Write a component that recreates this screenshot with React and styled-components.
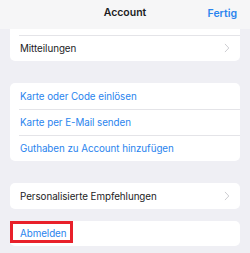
import React from "react";
import styled, { createGlobalStyle } from "styled-components";

const Global = createGlobalStyle`
  html, body { margin: 0; padding: 0; background: #efeff4; }
  body { font-family: Inter, "Noto Sans", sans-serif; -webkit-font-smoothing: antialiased; }
`;

const Screen = styled.div`
  position: relative;
  width: 250px;
  height: 253px;
  overflow: hidden;
  background: #efeff4;
`;

const NavBar = styled.div`
  position: absolute;
  top: 0;
  left: 0;
  right: 0;
  height: 29px;
  background: #f6f6f7;
  display: flex;
  align-items: center;
  justify-content: center;
  z-index: 2;
`;

const Title = styled.div`
  font-size: 10.5px;
  font-weight: 600;
  color: #1c1c1e;
  margin-top: -4px;
`;

const Done = styled.div`
  position: absolute;
  right: 13px;
  top: 7px;
  font-size: 10.5px;
  font-weight: 600;
  color: #2a84ee;
`;

const Content = styled.div`
  display: flex;
  flex-direction: column;
  padding: 9px 10px 0;
`;

const Card = styled.div`
  position: relative;
  background: #fff;
  border-radius: 5px;
  margin-bottom: ${p => p.gap || 22}px;
`;

const Row = styled.div`
  position: relative;
  height: ${p => p.h || 26}px;
  display: flex;
  align-items: center;
  padding: 0 10px 0 10px;
  font-size: 9.8px;
  letter-spacing: -0.05px;
  color: ${p => (p.link ? "#2a84ee" : "#1c1c1e")};
  & + &::before {
    content: "";
    position: absolute;
    top: 0;
    left: 9px;
    right: 0;
    height: 1px;
    background: #e4e4e8;
  }
`;

const Label = styled.span`
  flex: 1;
`;

const Chevron = () => (
  <svg width="6" height="10" viewBox="0 0 6 10">
    <path d="M1.2 1.2l3.6 3.8-3.6 3.8" fill="none" stroke="#cdcdd1" strokeWidth="1" strokeLinecap="round" strokeLinejoin="round" />
  </svg>
);

const Highlight = styled.div`
  position: absolute;
  left: 0;
  top: 0;
  width: 63px;
  height: 22px;
  box-sizing: border-box;
  border: 3.5px solid #e8202a;
`;

export default function App() {
  return (
    <>
      <Global />
      <Screen>
        <NavBar>
          <Title>Account</Title>
          <Done>Fertig</Done>
        </NavBar>
        <Content>
          <Card>
            <Row />
            <Row><Label>Mitteilungen</Label><Chevron /></Row>
          </Card>
          <Card>
            <Row link><Label>Karte oder Code einlösen</Label></Row>
            <Row link><Label>Karte per E-Mail senden</Label></Row>
            <Row link><Label>Guthaben zu Account hinzufügen</Label></Row>
          </Card>
          <Card gap={12}>
            <Row><Label>Personalisierte Empfehlungen</Label><Chevron /></Row>
          </Card>
          <Card>
            <Row link h={25}><Label>Abmelden</Label></Row>
            <Highlight />
          </Card>
        </Content>
      </Screen>
    </>
  );
}
